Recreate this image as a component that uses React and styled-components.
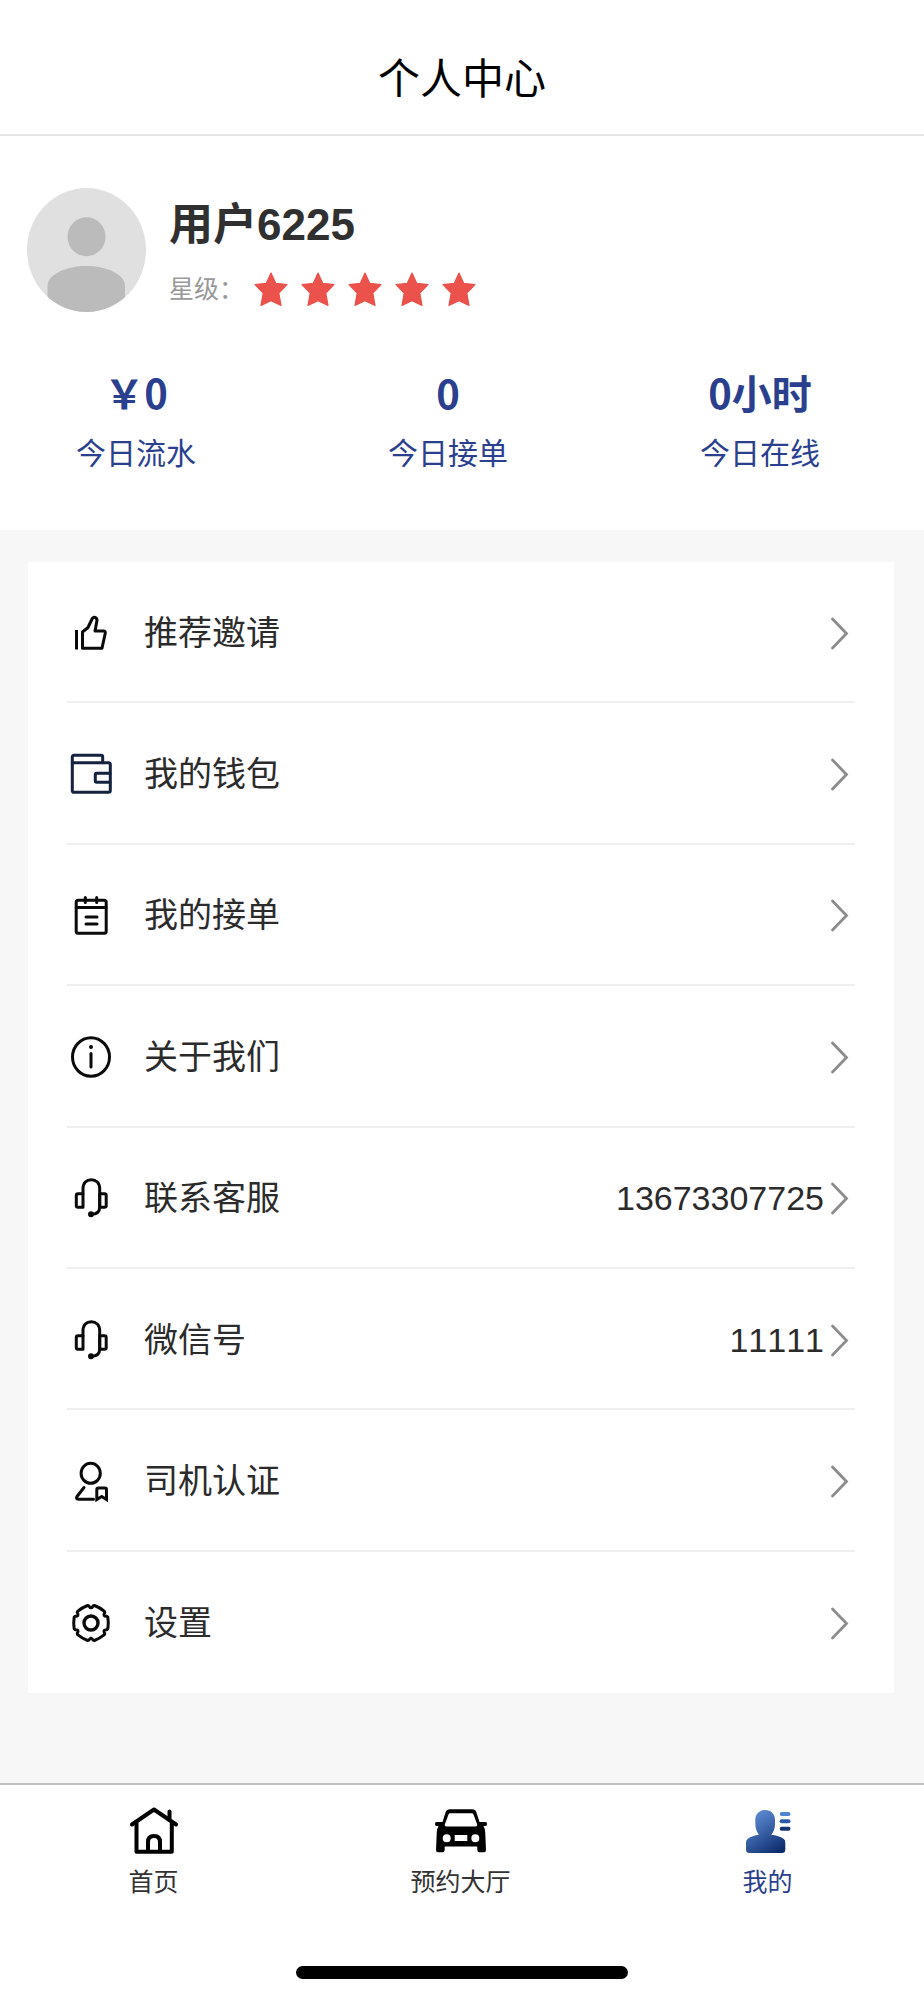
import React from "react"
import styled, { createGlobalStyle } from "styled-components"

const GlobalStyle = createGlobalStyle`
  * {
    box-sizing: border-box;
  }
  body {
    margin: 0;
    background: #ffffff;
    font-family: "Liberation Sans", "Noto Sans CJK SC", sans-serif;
    font-kerning: none;
    color: #2b2b2b;
  }
  a {
    color: inherit;
    text-decoration: none;
  }
`

const Page = styled.div`
  display: flex;
  flex-direction: column;
  min-height: 100vh;
`

const Header = styled.header`
  padding: 50px 0 24px;
  border-bottom: 2px solid #e6e6e6;
`

const Title = styled.h1`
  margin: 0;
  font-size: 42px;
  font-weight: 400;
  line-height: 60px;
  text-align: center;
  color: #000000;
`

const Profile = styled.section`
  padding: 52px 27px 0;
  display: flex;
  align-items: center;
  gap: 23px;
`

const ProfileText = styled.div`
  display: flex;
  flex-direction: column;
  gap: 14px;
`

const UserName = styled.h2`
  margin: 0;
  font-size: 44px;
  line-height: 64px;
  color: #303030;
`

const Rating = styled.div`
  display: flex;
  align-items: center;
  gap: 9px;
  font-size: 25px;
  line-height: 36px;
  color: #999999;
`

const Stars = styled.div`
  display: flex;
  gap: 11px;
`

const Stats = styled.section`
  display: flex;
  justify-content: space-between;
  padding: 52px 104px 55px 76px;
  color: #2b3f8f;
`

const Stat = styled.div`
  display: flex;
  flex-direction: column;
  align-items: center;
  gap: 13px;
`

const StatValue = styled.strong`
  font-family: "Noto Sans CJK SC", sans-serif;
  font-size: 40px;
  line-height: 56px;
`

const StatLabel = styled.span`
  font-size: 30px;
  line-height: 42px;
`

const Body = styled.main`
  flex: 1;
  display: flex;
  flex-direction: column;
  padding: 32px 30px 90px 28px;
  background: #f7f7f7;
`

const Menu = styled.nav`
  flex: 1;
  display: grid;
  grid-auto-rows: 1fr;
  padding: 0 39px;
  background: #ffffff;
`

const MenuRow = styled.a`
  display: flex;
  align-items: center;
  min-height: 100px;
  padding: 2px 6px 0 2px;
  border-bottom: 2px solid #efefef;
  font-size: 34px;
  line-height: 48px;

  &:last-child {
    border-bottom: 0;
  }
`

const MenuLabel = styled.span`
  flex: 1;
  margin-left: 31px;
`

const MenuValue = styled.span`
  margin-right: 6px;
`

const TabBar = styled.nav`
  display: flex;
  padding-right: 3px;
  border-top: 2px solid #bfbfbf;
`

const Tab = styled.a`
  flex: 1;
  display: flex;
  flex-direction: column;
  align-items: center;
  gap: 7px;
  padding-top: 20px;
  font-size: 25px;
  line-height: 36px;
  color: ${(props) => (props.$active ? "#2b3f8f" : "#333333")};
`

const HomeIndicator = styled.div`
  width: 36%;
  height: 13px;
  margin: 66px auto 21px;
  border-radius: 7px;
  background: #000000;
`

const Line = styled.svg.attrs({
  width: 44,
  height: 44,
  viewBox: "0 0 44 44",
  fill: "none",
  strokeLinecap: "round",
  strokeLinejoin: "round",
  "aria-hidden": true,
})`
  flex: none;
  stroke: ${(props) => props.$color || "#0a0a0a"};
  stroke-width: 3;
`

const TabIcon = styled.svg.attrs({
  width: 52,
  height: 52,
  viewBox: "0 0 52 52",
  "aria-hidden": true,
})`
  flex: none;
`

const Avatar = () => (
  <svg width="119" height="124" viewBox="0 0 119 124" role="img" aria-label="头像">
    <clipPath id="avatar-clip">
      <ellipse cx="59.5" cy="62" rx="59.5" ry="62" />
    </clipPath>
    <g clipPath="url(#avatar-clip)">
      <rect width="119" height="124" fill="#e0e0e0" />
      <ellipse cx="59.5" cy="48.7" rx="19" ry="19.5" fill="#bbbbbb" />
      <path d="M20.5 124V98C20.5 86 40 78 59.5 78S98 86 98 98v26z" fill="#bbbbbb" />
    </g>
  </svg>
)

const Star = () => (
  <svg width="36" height="36" viewBox="0 0 36 36" aria-hidden="true">
    <path
      d="M18 2l4.8 10.4 11.2 1.2-8.2 8.4 2.2 12.400L18 29.600 8 34.400l2.200-12.400L2 13.600l11.200-1.200z"
      fill="#eb524c"
      stroke="#eb524c"
      strokeWidth="1.2"
      strokeLinejoin="round"
    />
  </svg>
)

const Chevron = () => (
  <svg width="19" height="34" viewBox="0 0 19 34" fill="none" aria-hidden="true">
    <path d="M2.5 3L16.5 17.500L2.500 32" stroke="#8c8c8c" strokeWidth="2.8" strokeLinecap="round" />
  </svg>
)

const ThumbIcon = () => (
  <Line strokeLinejoin="miter">
    <path d="M7.5 19V38.500" strokeLinecap="butt" />
    <path d="M13.500 37.300V21L19 16.500L22.800 8.500C23.600 6.300 25.500 5.800 27 7C28.200 8 28.200 9 27.800 10.500L26 20H34.500Q36.700 20 36.300 22L33 37.300Z" />
  </Line>
)

const WalletIcon = () => (
  <Line $color="#14223f">
    <path d="M3.300 10.700V5Q3.300 3.300 5 3.300H32Q33.700 3.300 33.700 5V10.700" />
    <path d="M3.300 10.700H39.500Q41.300 10.700 41.300 12.500V38.500Q41.300 40.300 39.500 40.300H5Q3.300 40.300 3.300 38.500Z" />
    <path d="M41 21.300H27.500Q26.300 21.300 26.300 22.500V29Q26.300 30.300 27.500 30.300H41" />
  </Line>
)

const OrderIcon = () => (
  <Line>
    <rect x="7.200" y="7.200" width="30" height="33" rx="2" />
    <path d="M7.200 14.500H37M16.300 4.500V9.500M27.700 4.500V9.500M17 24H28M17 31H28" />
  </Line>
)

const InfoIcon = () => (
  <Line>
    <ellipse cx="22" cy="22" rx="18.500" ry="19.300" />
    <path d="M22 18.500V32" />
    <circle cx="22" cy="12" r="2" fill="#0a0a0a" stroke="none" />
  </Line>
)

const HeadsetIcon = () => (
  <Line>
    <path d="M14 31.300H9Q7.300 31.300 7.300 29.500V19.500Q7.300 17.700 9 17.700H14V31.300Z" />
    <path d="M30.700 17.700H35.500Q37.200 17.700 37.200 19.500V29.500Q37.200 31.300 35.500 31.300H30.700Z" />
    <path d="M14 17.700V13C14 7 17.500 3.700 22.300 3.700S30.700 7 30.700 13V31C30.700 35.500 28.500 38.300 22 38.300" />
    <circle cx="22" cy="38.300" r="3" fill="#0a0a0a" stroke="none" />
  </Line>
)

const DriverIcon = () => (
  <Line>
    <ellipse cx="21.700" cy="14.300" rx="9.600" ry="10" />
    <path d="M15 28.500L8 37.500Q6.500 40.200 9.500 40.200H24.500" />
    <path
      d="M27.800 40.500V30.500Q27.800 29 29.300 29H36Q37.500 29 37.500 30.500V40.500L32.700 37.500Z"
      strokeLinejoin="miter"
    />
  </Line>
)

// gear outline: six flat lobes with a rounded notch between each pair
const point = (deg, radius) => {
  const rad = (deg * Math.PI) / 180
  return `${(22 + radius * Math.cos(rad)).toFixed(2)} ${(22 + radius * Math.sin(rad)).toFixed(2)}`
}

const gearPath =
  [0, 60, 120, 180, 240, 300]
    .map((a, i) => {
      const start = `${i === 0 ? "M" : "L"}${point(a - 19, 17.8)}`
      return `${start}Q${point(a, 17.8)} ${point(a + 19, 17.8)}L${point(a + 23, 17.2)}Q${point(a + 30, 13.2)} ${point(a + 37, 17.2)}`
    })
    .join("") + "Z"

const GearIcon = () => (
  <Line>
    <path d={gearPath} />
    <circle cx="22" cy="22" r="7" strokeWidth="3.4" />
  </Line>
)

const HomeIcon = () => (
  <TabIcon fill="none" stroke="#000000" strokeWidth="4" strokeLinecap="round" strokeLinejoin="round">
    <path d="M4 19.500L26 4.500L48 19.500" />
    <path d="M41.500 6.500V15" />
    <path d="M8.500 18V46.800H43.800V18" />
    <path d="M20 46V37Q20 31 26 31T32 37V46" />
  </TabIcon>
)

const CarIcon = () => (
  <TabIcon>
    <path
      fillRule="evenodd"
      d="M15 4.300H37Q40.500 4.300 41.500 7.500L44.500 17H50.500Q52 17 52 19T50.500 21H48.500Q50 23.500 50.200 27L51 45Q51 47.300 49 47.300H44.500Q42.300 47.300 42.300 45V41.500H9.700V45Q9.700 47.300 7.500 47.300H3Q1 47.300 1 45L1.800 27Q2 23.500 3.500 21H1.500Q0 21 0 19T1.500 17H7.500L10.500 7.500Q11.500 4.300 15 4.300ZM15 8.300Q13.800 8.300 13.300 10L9.800 19.500Q9.300 21.500 11.500 21.500H40.500Q42.700 21.500 42.200 19.500L38.700 10Q38.200 8.300 37 8.300ZM15.700 33.300A4 4 0 1 0 7.700 33.300A4 4 0 1 0 15.700 33.300ZM44.300 33.300A4 4 0 1 0 36.300 33.300A4 4 0 1 0 44.300 33.300ZM19.700 30V36H32.300V30Z"
    />
  </TabIcon>
)

const MineIcon = () => (
  <TabIcon>
    <defs>
      <linearGradient id="mine-body" x1="0.2" y1="0" x2="0.8" y2="1">
        <stop offset="0" stopColor="#6492dc" />
        <stop offset="1" stopColor="#0c2c6c" />
      </linearGradient>
    </defs>
    <path
      fill="url(#mine-body)"
      d="M23.200 5C29 5 33 9 33 15V19C33 23.500 31.500 27 29.300 29.700C34 30.300 38.500 31.700 41.500 33.700Q43.300 35 43.300 37.500V44.500Q43.300 48 40 48H7.500Q4 48 4 44.500V37.500Q4 35 5.800 33.700C8.500 31.700 12.500 30.300 17 29.700C14.800 27 13.300 23.500 13.300 19V15C13.300 9 17.500 5 23.200 5Z"
    />
    <g strokeWidth="4" strokeLinecap="round">
      <path d="M39.700 9H46.500" stroke="#4f84d0" />
      <path d="M39.700 16.300H46.500" stroke="#2d5aa8" />
      <path d="M39.700 23.700H46.500" stroke="#143675" />
    </g>
  </TabIcon>
)

const stats = [
  { value: "￥0", label: "今日流水" },
  { value: "0", label: "今日接单" },
  { value: "0小时", label: "今日在线" },
]

const menu = [
  { id: "invite", label: "推荐邀请", Icon: ThumbIcon },
  { id: "wallet", label: "我的钱包", Icon: WalletIcon },
  { id: "orders", label: "我的接单", Icon: OrderIcon },
  { id: "about", label: "关于我们", Icon: InfoIcon },
  { id: "service", label: "联系客服", Icon: HeadsetIcon, value: "13673307725" },
  { id: "wechat", label: "微信号", Icon: HeadsetIcon, value: "11111" },
  { id: "verify", label: "司机认证", Icon: DriverIcon },
  { id: "settings", label: "设置", Icon: GearIcon },
]

const tabs = [
  { id: "home", label: "首页", Icon: HomeIcon },
  { id: "hall", label: "预约大厅", Icon: CarIcon },
  { id: "mine", label: "我的", Icon: MineIcon, active: true },
]

const App = () => {
  return (
    <Page>
      <GlobalStyle />
      <Header>
        <Title>个人中心</Title>
      </Header>
      <Profile>
        <Avatar />
        <ProfileText>
          <UserName>用户6225</UserName>
          <Rating>
            星级：
            <Stars>
              {[1, 2, 3, 4, 5].map((n) => (
                <Star key={n} />
              ))}
            </Stars>
          </Rating>
        </ProfileText>
      </Profile>
      <Stats>
        {stats.map((stat) => (
          <Stat key={stat.label}>
            <StatValue>{stat.value}</StatValue>
            <StatLabel>{stat.label}</StatLabel>
          </Stat>
        ))}
      </Stats>
      <Body>
        <Menu>
          {menu.map(({ id, label, Icon, value }) => (
            <MenuRow key={id} href={`#${id}`}>
              <Icon />
              <MenuLabel>{label}</MenuLabel>
              {value && <MenuValue>{value}</MenuValue>}
              <Chevron />
            </MenuRow>
          ))}
        </Menu>
      </Body>
      <TabBar>
        {tabs.map(({ id, label, Icon, active }) => (
          <Tab key={id} href={`#${id}`} $active={active} aria-current={active ? "page" : undefined}>
            <Icon />
            {label}
          </Tab>
        ))}
      </TabBar>
      <HomeIndicator />
    </Page>
  )
}

export default App
